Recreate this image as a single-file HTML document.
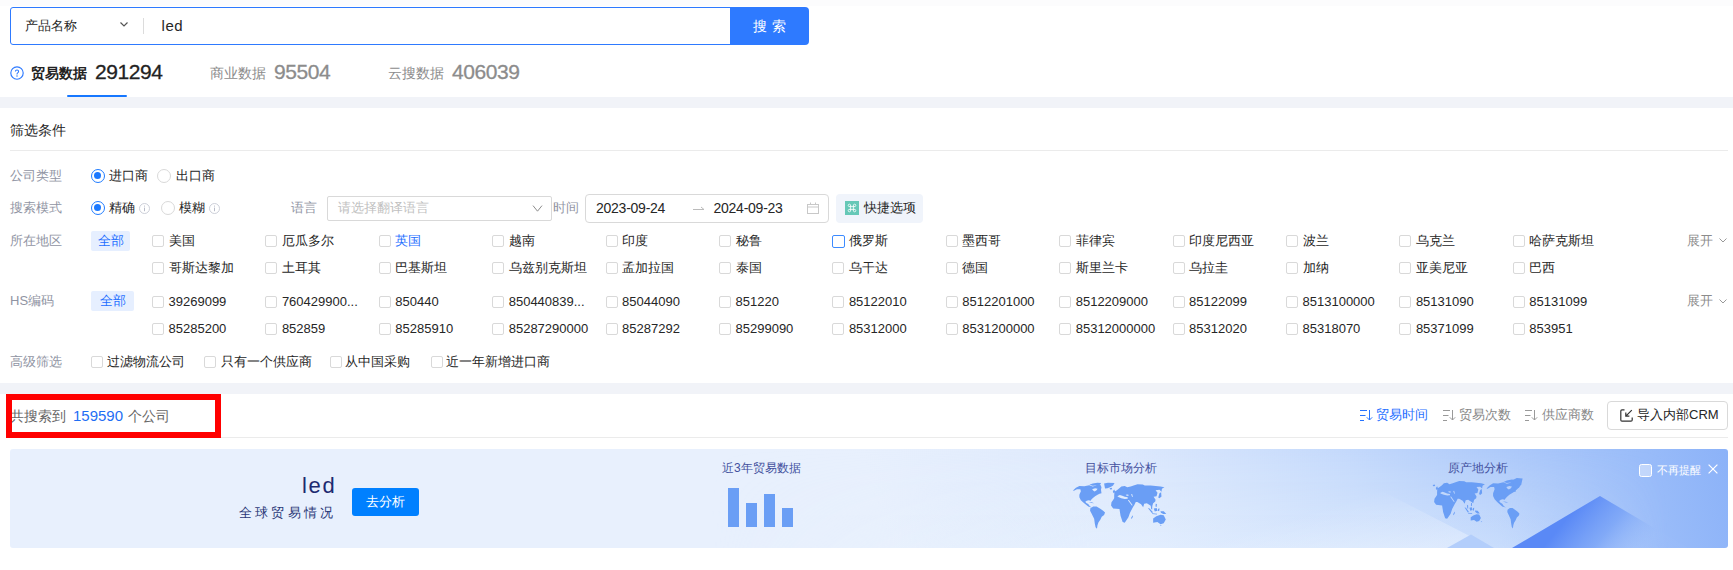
<!DOCTYPE html><html><head><meta charset="utf-8"><style>
*{margin:0;padding:0;box-sizing:border-box}
html,body{width:1733px;height:570px;overflow:hidden;background:#fff}
body{font-family:"Liberation Sans",sans-serif;color:#262626;font-size:13px;position:relative}
.a{position:absolute;white-space:nowrap}
.cb{position:absolute;width:12px;height:12px;border:1px solid #d9d9d9;border-radius:2px;background:#fff}
.lbl{position:absolute;color:#999;font-size:13px;white-space:nowrap}
.t13{font-size:13px;color:#262626}
</style></head><body>
<div class="a" style="left:0;top:0;width:1733px;height:6px;background:#fcfcfd"></div>
<div class="a" style="left:10px;top:7px;width:721px;height:38px;border:1px solid #2e7aff;border-radius:3px 0 0 3px;background:#fff"></div>
<div class="a" id="s_name" style="left:25px;top:18px;font-size:13px;line-height:16px;color:#262626">产品名称</div>
<svg class="a" style="left:119px;top:21px" width="10" height="7" viewBox="0 0 10 7"><path d="M1.5 1.5 L5 5 L8.5 1.5" fill="none" stroke="#555" stroke-width="1.2"/></svg>
<div class="a" style="left:143px;top:18px;width:1px;height:16px;background:#dcdcdc"></div>
<div class="a" id="s_led" style="left:161.5px;top:17px;font-size:15px;line-height:18px;color:#262626;letter-spacing:0.6px">led</div>
<div class="a" style="left:730px;top:7px;width:79px;height:38px;background:#2e7aff;border-radius:0 4px 4px 0"></div>
<div class="a" id="s_btn" style="left:753px;top:18px;font-size:14px;line-height:16px;color:#fff;letter-spacing:5px">搜索</div>
<svg class="a" style="left:10px;top:65.5px" width="14" height="14" viewBox="0 0 14 14"><circle cx="7" cy="7" r="6.2" fill="none" stroke="#2f7bff" stroke-width="1.15"/><path d="M5.4 5.6 Q5.4 4 7 4 Q8.6 4 8.6 5.4 Q8.6 6.3 7.6 6.9 Q7 7.2 7 8.4" fill="none" stroke="#2f7bff" stroke-width="1.1"/><circle cx="7" cy="10.1" r="0.75" fill="#2f7bff"/></svg>
<div class="a" id="t1" style="left:31px;top:65px;font-size:14px;line-height:16px;font-weight:bold;color:#222">贸易数据</div>
<div class="a" id="t1n" style="left:95px;top:60px;font-size:21px;line-height:23px;letter-spacing:-0.45px;-webkit-text-stroke:0.3px currentColor;color:#222">291294</div>
<div class="a" id="t2" style="left:210px;top:65px;font-size:14px;line-height:16px;color:#8c8c8c">商业数据</div>
<div class="a" id="t2n" style="left:274px;top:60px;font-size:21px;line-height:23px;letter-spacing:-0.45px;-webkit-text-stroke:0.3px currentColor;color:#8c8c8c">95504</div>
<div class="a" id="t3" style="left:388px;top:65px;font-size:14px;line-height:16px;color:#8c8c8c">云搜数据</div>
<div class="a" id="t3n" style="left:452px;top:60px;font-size:21px;line-height:23px;letter-spacing:-0.45px;-webkit-text-stroke:0.3px currentColor;color:#8c8c8c">406039</div>
<div class="a" style="left:67px;top:95px;width:60px;height:2px;background:#1677ff;border-radius:1px"></div>
<div class="a" style="left:0;top:97px;width:1733px;height:11px;background:#f1f3f8"></div>
<div class="a" style="left:0;top:383px;width:1733px;height:11px;background:#f1f3f8"></div>
<div class="a" id="f_title" style="left:10px;top:122px;font-size:14px;line-height:16px;color:#262626">筛选条件</div>
<div class="a" style="left:10px;top:150px;width:1718px;height:1px;background:#ebebeb"></div>
<div class="a" id="l1" style="left:10px;top:168px;font-size:13px;line-height:16px;color:#9094a3;">公司类型</div>
<div class="a" style="left:91px;top:168.5px;width:14px;height:14px;border:1.4px solid #1f7cff;border-radius:50%;background:#fff"><div class="a" style="left:2.1px;top:2.1px;width:7px;height:7px;border-radius:50%;background:#1a78ff"></div></div>
<div class="a" style="left:109px;top:168px;font-size:13px;line-height:16px;color:#262626;">进口商</div>
<div class="a" style="left:157px;top:168.5px;width:14px;height:14px;border:1px solid #d9d9d9;border-radius:50%;background:#fff"></div>
<div class="a" style="left:176px;top:168px;font-size:13px;line-height:16px;color:#262626;">出口商</div>
<div class="a" style="left:10px;top:200px;font-size:13px;line-height:16px;color:#9094a3;">搜索模式</div>
<div class="a" style="left:91px;top:201px;width:14px;height:14px;border:1.4px solid #1f7cff;border-radius:50%;background:#fff"><div class="a" style="left:2.1px;top:2.1px;width:7px;height:7px;border-radius:50%;background:#1a78ff"></div></div>
<div class="a" style="left:109px;top:200px;font-size:13px;line-height:16px;color:#262626;">精确</div>
<svg class="a" style="left:139px;top:202.5px" width="11" height="11" viewBox="0 0 11 11"><circle cx="5.5" cy="5.5" r="5" fill="none" stroke="#c6c9d4" stroke-width="0.9"/><rect x="5" y="4.6" width="1" height="3.6" fill="#b8bcc8"/><rect x="5" y="2.6" width="1" height="1" fill="#b8bcc8"/></svg>
<div class="a" style="left:161px;top:201px;width:14px;height:14px;border:1px solid #d9d9d9;border-radius:50%;background:#fff"></div>
<div class="a" style="left:179px;top:200px;font-size:13px;line-height:16px;color:#262626;">模糊</div>
<svg class="a" style="left:209px;top:202.5px" width="11" height="11" viewBox="0 0 11 11"><circle cx="5.5" cy="5.5" r="5" fill="none" stroke="#c6c9d4" stroke-width="0.9"/><rect x="5" y="4.6" width="1" height="3.6" fill="#b8bcc8"/><rect x="5" y="2.6" width="1" height="1" fill="#b8bcc8"/></svg>
<div class="a" style="left:291px;top:200px;font-size:13px;line-height:16px;color:#9094a3;">语言</div>
<div class="a" style="left:327px;top:196px;width:225px;height:25px;border:1px solid #d9d9d9;border-radius:2px"></div>
<div class="a" style="left:338px;top:200px;font-size:13px;line-height:16px;color:#bfbfbf;">请选择翻译语言</div>
<svg class="a" style="left:532px;top:205px" width="11" height="8" viewBox="0 0 11 8"><path d="M1 0.6 L5.5 6.2 L10 0.6" fill="none" stroke="#8c8c8c" stroke-width="1"/></svg>
<div class="a" style="left:552.5px;top:200px;font-size:13px;line-height:16px;color:#9094a3;">时间</div>
<div class="a" style="left:585px;top:194px;width:244px;height:29px;border:1px solid #d9d9d9;border-radius:4px"></div>
<div class="a" style="left:596px;top:199.5px;font-size:14px;line-height:16px;color:#262626;letter-spacing:-0.25px">2023-09-24</div>
<svg class="a" style="left:693px;top:205px" width="12" height="6" viewBox="0 0 12 6"><path d="M0 4.5 H11 L8 2" fill="none" stroke="#bbb" stroke-width="1"/></svg>
<div class="a" style="left:713.5px;top:199.5px;font-size:14px;line-height:16px;color:#262626;letter-spacing:-0.25px">2024-09-23</div>
<svg class="a" style="left:807px;top:202px" width="12" height="12" viewBox="0 0 12 12"><rect x="0.5" y="2.5" width="11" height="9" fill="none" stroke="#c8c8c8" stroke-width="1"/><path d="M0.5 5 H11.5 M3.5 0.5 V3 M8.5 0.5 V3" stroke="#c8c8c8" stroke-width="1"/></svg>
<div class="a" style="left:836px;top:194px;width:87px;height:29px;background:#f0f4fb;border-radius:4px"></div>
<svg class="a" style="left:845px;top:201px" width="14" height="14" viewBox="0 0 14 14"><rect width="14" height="14" fill="#66c8b7"/><g fill="none" stroke="#fff" stroke-width="0.85" opacity="0.95"><path d="M5.6 4.4 V9.6 M8.4 4.4 V9.6 M4.4 5.6 H9.6 M4.4 8.4 H9.6"/><circle cx="4.4" cy="4.4" r="1.2"/><circle cx="9.6" cy="4.4" r="1.2"/><circle cx="4.4" cy="9.6" r="1.2"/><circle cx="9.6" cy="9.6" r="1.2"/></g></svg>
<div class="a" style="left:864px;top:200px;font-size:13px;line-height:16px;color:#262626;">快捷选项</div>
<div class="a" style="left:10px;top:232.5px;font-size:13px;line-height:16px;color:#9094a3;">所在地区</div>
<div class="a" style="left:91px;top:231px;width:39px;height:20px;background:#e6efff;border-radius:2px"></div>
<div class="a" style="left:98px;top:232.5px;font-size:13px;line-height:16px;color:#1f6fff;">全部</div>
<div class="cb" style="left:152.0px;top:235px;border-color:#d9d9d9"></div>
<div class="a" style="left:168.5px;top:232.5px;font-size:13px;line-height:16px;color:#262626;">美国</div>
<div class="cb" style="left:265.4px;top:235px;border-color:#d9d9d9"></div>
<div class="a" style="left:281.9px;top:232.5px;font-size:13px;line-height:16px;color:#262626;">厄瓜多尔</div>
<div class="cb" style="left:378.8px;top:235px;border-color:#d9d9d9"></div>
<div class="a" style="left:395.3px;top:232.5px;font-size:13px;line-height:16px;color:#1f6fff;">英国</div>
<div class="cb" style="left:492.2px;top:235px;border-color:#d9d9d9"></div>
<div class="a" style="left:508.7px;top:232.5px;font-size:13px;line-height:16px;color:#262626;">越南</div>
<div class="cb" style="left:605.6px;top:235px;border-color:#d9d9d9"></div>
<div class="a" style="left:622.1px;top:232.5px;font-size:13px;line-height:16px;color:#262626;">印度</div>
<div class="cb" style="left:719.0px;top:235px;border-color:#d9d9d9"></div>
<div class="a" style="left:735.5px;top:232.5px;font-size:13px;line-height:16px;color:#262626;">秘鲁</div>
<div class="cb" style="left:832.4px;top:235px;width:13px;height:13px;border-color:#3d8bff"></div>
<div class="a" style="left:848.9px;top:232.5px;font-size:13px;line-height:16px;color:#262626;">俄罗斯</div>
<div class="cb" style="left:945.8px;top:235px;border-color:#d9d9d9"></div>
<div class="a" style="left:962.3px;top:232.5px;font-size:13px;line-height:16px;color:#262626;">墨西哥</div>
<div class="cb" style="left:1059.2px;top:235px;border-color:#d9d9d9"></div>
<div class="a" style="left:1075.7px;top:232.5px;font-size:13px;line-height:16px;color:#262626;">菲律宾</div>
<div class="cb" style="left:1172.6px;top:235px;border-color:#d9d9d9"></div>
<div class="a" style="left:1189.1px;top:232.5px;font-size:13px;line-height:16px;color:#262626;">印度尼西亚</div>
<div class="cb" style="left:1286.0px;top:235px;border-color:#d9d9d9"></div>
<div class="a" style="left:1302.5px;top:232.5px;font-size:13px;line-height:16px;color:#262626;">波兰</div>
<div class="cb" style="left:1399.4px;top:235px;border-color:#d9d9d9"></div>
<div class="a" style="left:1415.9px;top:232.5px;font-size:13px;line-height:16px;color:#262626;">乌克兰</div>
<div class="cb" style="left:1512.8px;top:235px;border-color:#d9d9d9"></div>
<div class="a" style="left:1529.3px;top:232.5px;font-size:13px;line-height:16px;color:#262626;">哈萨克斯坦</div>
<div class="cb" style="left:152.0px;top:262px;border-color:#d9d9d9"></div>
<div class="a" style="left:168.5px;top:259.5px;font-size:13px;line-height:16px;color:#262626;">哥斯达黎加</div>
<div class="cb" style="left:265.4px;top:262px;border-color:#d9d9d9"></div>
<div class="a" style="left:281.9px;top:259.5px;font-size:13px;line-height:16px;color:#262626;">土耳其</div>
<div class="cb" style="left:378.8px;top:262px;border-color:#d9d9d9"></div>
<div class="a" style="left:395.3px;top:259.5px;font-size:13px;line-height:16px;color:#262626;">巴基斯坦</div>
<div class="cb" style="left:492.2px;top:262px;border-color:#d9d9d9"></div>
<div class="a" style="left:508.7px;top:259.5px;font-size:13px;line-height:16px;color:#262626;">乌兹别克斯坦</div>
<div class="cb" style="left:605.6px;top:262px;border-color:#d9d9d9"></div>
<div class="a" style="left:622.1px;top:259.5px;font-size:13px;line-height:16px;color:#262626;">孟加拉国</div>
<div class="cb" style="left:719.0px;top:262px;border-color:#d9d9d9"></div>
<div class="a" style="left:735.5px;top:259.5px;font-size:13px;line-height:16px;color:#262626;">泰国</div>
<div class="cb" style="left:832.4px;top:262px;border-color:#d9d9d9"></div>
<div class="a" style="left:848.9px;top:259.5px;font-size:13px;line-height:16px;color:#262626;">乌干达</div>
<div class="cb" style="left:945.8px;top:262px;border-color:#d9d9d9"></div>
<div class="a" style="left:962.3px;top:259.5px;font-size:13px;line-height:16px;color:#262626;">德国</div>
<div class="cb" style="left:1059.2px;top:262px;border-color:#d9d9d9"></div>
<div class="a" style="left:1075.7px;top:259.5px;font-size:13px;line-height:16px;color:#262626;">斯里兰卡</div>
<div class="cb" style="left:1172.6px;top:262px;border-color:#d9d9d9"></div>
<div class="a" style="left:1189.1px;top:259.5px;font-size:13px;line-height:16px;color:#262626;">乌拉圭</div>
<div class="cb" style="left:1286.0px;top:262px;border-color:#d9d9d9"></div>
<div class="a" style="left:1302.5px;top:259.5px;font-size:13px;line-height:16px;color:#262626;">加纳</div>
<div class="cb" style="left:1399.4px;top:262px;border-color:#d9d9d9"></div>
<div class="a" style="left:1415.9px;top:259.5px;font-size:13px;line-height:16px;color:#262626;">亚美尼亚</div>
<div class="cb" style="left:1512.8px;top:262px;border-color:#d9d9d9"></div>
<div class="a" style="left:1529.3px;top:259.5px;font-size:13px;line-height:16px;color:#262626;">巴西</div>
<div class="a" style="left:1687px;top:232.5px;font-size:13px;line-height:16px;color:#8c8c8c;">展开</div>
<svg class="a" style="left:1719px;top:238px" width="8" height="5" viewBox="0 0 8 5"><path d="M0.5 0.5 L4 4 L7.5 0.5" fill="none" stroke="#999" stroke-width="1"/></svg>
<div class="a" style="left:10px;top:293px;font-size:13px;line-height:16px;color:#9094a3;">HS编码</div>
<div class="a" style="left:91px;top:291px;width:43px;height:20px;background:#e6efff;border-radius:2px"></div>
<div class="a" style="left:100px;top:293px;font-size:13px;line-height:16px;color:#1f6fff;">全部</div>
<div class="cb" style="left:152.0px;top:296px;border-color:#d9d9d9"></div>
<div class="a" style="left:168.5px;top:293.5px;font-size:13px;line-height:16px;color:#262626;">39269099</div>
<div class="cb" style="left:265.4px;top:296px;border-color:#d9d9d9"></div>
<div class="a" style="left:281.9px;top:293.5px;font-size:13px;line-height:16px;color:#262626;">760429900...</div>
<div class="cb" style="left:378.8px;top:296px;border-color:#d9d9d9"></div>
<div class="a" style="left:395.3px;top:293.5px;font-size:13px;line-height:16px;color:#262626;">850440</div>
<div class="cb" style="left:492.2px;top:296px;border-color:#d9d9d9"></div>
<div class="a" style="left:508.7px;top:293.5px;font-size:13px;line-height:16px;color:#262626;">850440839...</div>
<div class="cb" style="left:605.6px;top:296px;border-color:#d9d9d9"></div>
<div class="a" style="left:622.1px;top:293.5px;font-size:13px;line-height:16px;color:#262626;">85044090</div>
<div class="cb" style="left:719.0px;top:296px;border-color:#d9d9d9"></div>
<div class="a" style="left:735.5px;top:293.5px;font-size:13px;line-height:16px;color:#262626;">851220</div>
<div class="cb" style="left:832.4px;top:296px;border-color:#d9d9d9"></div>
<div class="a" style="left:848.9px;top:293.5px;font-size:13px;line-height:16px;color:#262626;">85122010</div>
<div class="cb" style="left:945.8px;top:296px;border-color:#d9d9d9"></div>
<div class="a" style="left:962.3px;top:293.5px;font-size:13px;line-height:16px;color:#262626;">8512201000</div>
<div class="cb" style="left:1059.2px;top:296px;border-color:#d9d9d9"></div>
<div class="a" style="left:1075.7px;top:293.5px;font-size:13px;line-height:16px;color:#262626;">8512209000</div>
<div class="cb" style="left:1172.6px;top:296px;border-color:#d9d9d9"></div>
<div class="a" style="left:1189.1px;top:293.5px;font-size:13px;line-height:16px;color:#262626;">85122099</div>
<div class="cb" style="left:1286.0px;top:296px;border-color:#d9d9d9"></div>
<div class="a" style="left:1302.5px;top:293.5px;font-size:13px;line-height:16px;color:#262626;">8513100000</div>
<div class="cb" style="left:1399.4px;top:296px;border-color:#d9d9d9"></div>
<div class="a" style="left:1415.9px;top:293.5px;font-size:13px;line-height:16px;color:#262626;">85131090</div>
<div class="cb" style="left:1512.8px;top:296px;border-color:#d9d9d9"></div>
<div class="a" style="left:1529.3px;top:293.5px;font-size:13px;line-height:16px;color:#262626;">85131099</div>
<div class="cb" style="left:152.0px;top:323px;border-color:#d9d9d9"></div>
<div class="a" style="left:168.5px;top:320.5px;font-size:13px;line-height:16px;color:#262626;">85285200</div>
<div class="cb" style="left:265.4px;top:323px;border-color:#d9d9d9"></div>
<div class="a" style="left:281.9px;top:320.5px;font-size:13px;line-height:16px;color:#262626;">852859</div>
<div class="cb" style="left:378.8px;top:323px;border-color:#d9d9d9"></div>
<div class="a" style="left:395.3px;top:320.5px;font-size:13px;line-height:16px;color:#262626;">85285910</div>
<div class="cb" style="left:492.2px;top:323px;border-color:#d9d9d9"></div>
<div class="a" style="left:508.7px;top:320.5px;font-size:13px;line-height:16px;color:#262626;">85287290000</div>
<div class="cb" style="left:605.6px;top:323px;border-color:#d9d9d9"></div>
<div class="a" style="left:622.1px;top:320.5px;font-size:13px;line-height:16px;color:#262626;">85287292</div>
<div class="cb" style="left:719.0px;top:323px;border-color:#d9d9d9"></div>
<div class="a" style="left:735.5px;top:320.5px;font-size:13px;line-height:16px;color:#262626;">85299090</div>
<div class="cb" style="left:832.4px;top:323px;border-color:#d9d9d9"></div>
<div class="a" style="left:848.9px;top:320.5px;font-size:13px;line-height:16px;color:#262626;">85312000</div>
<div class="cb" style="left:945.8px;top:323px;border-color:#d9d9d9"></div>
<div class="a" style="left:962.3px;top:320.5px;font-size:13px;line-height:16px;color:#262626;">8531200000</div>
<div class="cb" style="left:1059.2px;top:323px;border-color:#d9d9d9"></div>
<div class="a" style="left:1075.7px;top:320.5px;font-size:13px;line-height:16px;color:#262626;">85312000000</div>
<div class="cb" style="left:1172.6px;top:323px;border-color:#d9d9d9"></div>
<div class="a" style="left:1189.1px;top:320.5px;font-size:13px;line-height:16px;color:#262626;">85312020</div>
<div class="cb" style="left:1286.0px;top:323px;border-color:#d9d9d9"></div>
<div class="a" style="left:1302.5px;top:320.5px;font-size:13px;line-height:16px;color:#262626;">85318070</div>
<div class="cb" style="left:1399.4px;top:323px;border-color:#d9d9d9"></div>
<div class="a" style="left:1415.9px;top:320.5px;font-size:13px;line-height:16px;color:#262626;">85371099</div>
<div class="cb" style="left:1512.8px;top:323px;border-color:#d9d9d9"></div>
<div class="a" style="left:1529.3px;top:320.5px;font-size:13px;line-height:16px;color:#262626;">853951</div>
<div class="a" style="left:1687px;top:293px;font-size:13px;line-height:16px;color:#8c8c8c;">展开</div>
<svg class="a" style="left:1719px;top:299px" width="8" height="5" viewBox="0 0 8 5"><path d="M0.5 0.5 L4 4 L7.5 0.5" fill="none" stroke="#999" stroke-width="1"/></svg>
<div class="a" style="left:10px;top:353.5px;font-size:13px;line-height:16px;color:#9094a3;">高级筛选</div>
<div class="cb" style="left:91px;top:355.5px;border-color:#d9d9d9"></div>
<div class="a" style="left:107px;top:353.5px;font-size:13px;line-height:16px;color:#262626;">过滤物流公司</div>
<div class="cb" style="left:204px;top:355.5px;border-color:#d9d9d9"></div>
<div class="a" style="left:220.5px;top:353.5px;font-size:13px;line-height:16px;color:#262626;">只有一个供应商</div>
<div class="cb" style="left:330px;top:355.5px;border-color:#d9d9d9"></div>
<div class="a" style="left:345px;top:353.5px;font-size:13px;line-height:16px;color:#262626;">从中国采购</div>
<div class="cb" style="left:431px;top:355.5px;border-color:#d9d9d9"></div>
<div class="a" style="left:446px;top:353.5px;font-size:13px;line-height:16px;color:#262626;">近一年新增进口商</div>
<div class="a" style="left:10px;top:407.5px;font-size:14px;line-height:16px;color:#666;">共搜索到</div>
<div class="a" style="left:73px;top:407.5px;font-size:15px;line-height:16px;color:#1f6ef4;">159590</div>
<div class="a" style="left:128px;top:407.5px;font-size:14px;line-height:16px;color:#666;">个公司</div>
<div class="a" style="left:6px;top:394px;width:215px;height:44px;border:6px solid #ff0000"></div>
<div class="a" style="left:221px;top:437px;width:1507px;height:1px;background:#ebebeb"></div>
<svg class="a" style="left:1360px;top:409px" width="14" height="13" viewBox="0 0 14 13"><path d="M0 1.5 H7 M0 6.5 H5.5 M0 11.5 H4" stroke="#2673ff" stroke-width="1.1"/><path d="M9.5 1 V11 M6.8 8.3 L9.5 11 L12.2 8.3" fill="none" stroke="#2673ff" stroke-width="1"/></svg>
<div class="a" style="left:1376px;top:407px;font-size:13px;line-height:16px;color:#1f6fff;">贸易时间</div>
<svg class="a" style="left:1443px;top:409px" width="14" height="13" viewBox="0 0 14 13"><path d="M0 1.5 H7 M0 6.5 H5.5 M0 11.5 H4" stroke="#999" stroke-width="1.1"/><path d="M9.5 1 V11 M6.8 8.3 L9.5 11 L12.2 8.3" fill="none" stroke="#999" stroke-width="1"/></svg>
<div class="a" style="left:1459px;top:407px;font-size:13px;line-height:16px;color:#888;">贸易次数</div>
<svg class="a" style="left:1525px;top:409px" width="14" height="13" viewBox="0 0 14 13"><path d="M0 1.5 H7 M0 6.5 H5.5 M0 11.5 H4" stroke="#999" stroke-width="1.1"/><path d="M9.5 1 V11 M6.8 8.3 L9.5 11 L12.2 8.3" fill="none" stroke="#999" stroke-width="1"/></svg>
<div class="a" style="left:1541.5px;top:407px;font-size:13px;line-height:16px;color:#888;">供应商数</div>
<div class="a" style="left:1607px;top:401px;width:121px;height:29px;border:1px solid #d9d9d9;border-radius:4px"></div>
<svg class="a" style="left:1620px;top:409px" width="13" height="13" viewBox="0 0 13 13"><path d="M4.5 0.8 H2 Q0.8 0.8 0.8 2 V11 Q0.8 12.2 2 12.2 H11 Q12.2 12.2 12.2 11 V8.5" fill="none" stroke="#333" stroke-width="1.2"/><path d="M11.8 1.2 L5.8 7.2 M5.8 3.6 V7.2 H9.4" fill="none" stroke="#333" stroke-width="1.2"/></svg>
<div class="a" style="left:1637px;top:407px;font-size:13px;line-height:16px;color:#262626;">导入内部CRM</div>
<div class="a" id="banner" style="left:10px;top:449px;width:1718px;height:99px;border-radius:3px;overflow:hidden">
<svg class="a" style="left:0;top:0" width="1718" height="99" viewBox="0 0 1718 99">
<defs>
<linearGradient id="bg" gradientUnits="userSpaceOnUse" x1="900" y1="180" x2="1718" y2="-40">
<stop offset="0" stop-color="#e8f0fd"/><stop offset="0.3" stop-color="#dde9fd"/><stop offset="0.55" stop-color="#c5dafc"/><stop offset="0.78" stop-color="#a8c6fa"/><stop offset="1" stop-color="#8ab1f8"/>
</linearGradient>
<linearGradient id="tri" gradientUnits="userSpaceOnUse" x1="1565" y1="60" x2="1625" y2="110">
<stop offset="0" stop-color="#5a89f6"/><stop offset="0.5" stop-color="#7aa4f7" stop-opacity="0.85"/><stop offset="1" stop-color="#9dbef9" stop-opacity="0.2"/>
</linearGradient>
<linearGradient id="wedge" gradientUnits="userSpaceOnUse" x1="1390" y1="35" x2="1410" y2="99">
<stop offset="0" stop-color="#ffffff" stop-opacity="0"/><stop offset="1" stop-color="#ffffff" stop-opacity="0.3"/>
</linearGradient>
<linearGradient id="low" gradientUnits="userSpaceOnUse" x1="0" y1="0" x2="0" y2="99">
<stop offset="0" stop-color="#eaf4ff" stop-opacity="0"/><stop offset="1" stop-color="#eaf4ff" stop-opacity="0.4"/>
</linearGradient>
<linearGradient id="lowx" gradientUnits="userSpaceOnUse" x1="700" y1="0" x2="1660" y2="0">
<stop offset="0" stop-color="#fff" stop-opacity="0"/><stop offset="0.4" stop-color="#fff" stop-opacity="1"/><stop offset="0.82" stop-color="#fff" stop-opacity="1"/><stop offset="1" stop-color="#fff" stop-opacity="0"/>
</linearGradient>
<mask id="lowm"><rect width="1718" height="99" fill="url(#lowx)"/></mask>
</defs>
<rect width="1718" height="99" fill="url(#bg)"/>
<rect width="1718" height="99" fill="url(#low)" mask="url(#lowm)"/>
<polygon points="1200,0 1290,0 1483,99 1200,99" fill="url(#wedge)"/>
<polygon points="1502,99 1590,47 1678,99" fill="url(#tri)"/>
<polygon points="1437,99 1461,85.5 1484,99" fill="#b3cefb"/>
</svg>
</div>
<div class="a" id="b_led" style="left:302px;top:474px;font-size:22px;line-height:24px;color:#1d2a70;letter-spacing:1.7px">led</div>
<div class="a" id="b_sub" style="left:238.5px;top:505px;font-size:13px;line-height:16px;color:#2a3878;letter-spacing:3.35px">全球贸易情况</div>
<div class="a" style="left:352px;top:488px;width:67px;height:28px;background:#0080ff;border-radius:3px"></div>
<div class="a" id="b_btn" style="left:366px;top:494px;font-size:13px;line-height:16px;color:#fff">去分析</div>
<div class="a" id="b_t1" style="left:722px;top:460px;font-size:12px;line-height:16px;color:#43509e">近3年贸易数据</div>
<div class="a" style="left:727.5px;top:488px;width:11px;height:39px;background:#6a9ef5"></div>
<div class="a" style="left:746px;top:503px;width:11px;height:24px;background:#6a9ef5"></div>
<div class="a" style="left:764px;top:494px;width:11px;height:33px;background:#6a9ef5"></div>
<div class="a" style="left:782px;top:508px;width:11px;height:19px;background:#6a9ef5"></div>
<div class="a" id="b_t2" style="left:1085px;top:460px;font-size:12px;line-height:16px;color:#43509e">目标市场分析</div>
<svg class="a" style="left:1060px;top:470px" width="120" height="70" viewBox="1060 470 120 70" fill="#6a9ef5"><g transform="matrix(0.09470,0,0,0.09473,1070,478)"><path fill-rule="evenodd" d="M31.5,132.7 L62.6,104.1 L98.9,83.4 L150.9,86 L202.8,75.6 L239.1,88.6 L270.2,80.8 L296.2,62.6 L322.1,73 L332.5,98.9 L327.3,124.9 L332.5,161.2 L311.7,166.4 L291,176.8 L265,192.4 L239.1,213.1 L223.5,228.7 L218.3,239.1 L197.6,233.9 L176.8,239.1 L161.2,249.5 L171.6,265 L192.4,275.4 L207.9,296.2 L228.7,311.7 L192.4,301.4 L166.4,280.6 L140.5,259.8 L114.5,233.9 L98.9,202.8 L98.9,176.8 L114.5,140.5 L109.3,119.7 L73,119.7 L41.9,135.3 Z M233.9,119.7 L265,109.3 L291,114.5 L280.6,130.1 L259.8,143.1 L244.3,132.7 Z"/><path fill-rule="evenodd" d="M205,72 L240,58 L290,50 L328,54 L318,72 L280,78 L240,82 Z"/><path fill-rule="evenodd" d="M197.6,254.7 L228.7,257.3 L254.6,267.6 L228.7,265 Z"/><path fill-rule="evenodd" d="M360,58 L400,50 L470,52 L455,80 L430,95 L395,108 L370,110 L365,85 Z"/><path fill-rule="evenodd" d="M215,320 L245,300 L280,300 L320,325 L350,345 L370,365 L360,390 L335,410 L320,440 L300,470 L290,500 L285,535 L270,520 L262,480 L255,430 L230,380 L212,345 Z"/><path fill-rule="evenodd" d="M466.5,187.2 L469.1,145.7 L495.1,130.1 L521,109.3 L541.8,88.6 L578.1,83.4 L604.1,98.9 L640.4,88.6 L671.5,78.2 L713,65.2 L768.5,67.8 L789.3,78.2 L851.6,78.2 L903.5,83.4 L955.4,88.6 L996.9,98.9 L971,114.5 L965.8,145.7 L945,124.9 L903.5,130.1 L924.2,156 L913.9,192.4 L882.7,197.6 L903.5,228.7 L900.4,248.9 L878.1,265.5 L867,304.4 L844.8,287.8 L811.5,265.5 L783.7,271.1 L772.6,310 L750.3,276.6 L711.4,254.4 L694.7,254.4 L678.1,287.8 L667,304.4 L633.6,365.6 L616.9,415.6 L578,471.1 L555.8,465.6 L533.6,398.9 L522.4,326.7 L455.7,321.1 L433.5,290 L438,255 L455,232 L466.5,215 Z M500.3,192.4 L526.2,179.4 L552.2,187.2 L578.1,197.6 L609.2,202.8 L609.2,218.3 L578.1,220.9 L541.8,213.1 L510.6,200.2 Z M588.5,176.8 L614.4,174.2 L619.6,187.2 L598.9,187.2 Z M645.6,171.6 L656,169 L663.7,197.6 L656,200.2 Z M611.4,235 L622,232 L660,285 L655,292 Z"/><path fill-rule="evenodd" d="M945,160 L962,150 L966,195 L945,215 L932,205 Z"/><path fill-rule="evenodd" d="M644.7,421.1 L661.4,393.3 L664.2,410 L650.3,432.2 Z"/><path fill-rule="evenodd" d="M822,318 L840,322 L877,362 L864,369 Z M868,372 L920,377 L918,385 L866,380 Z M885,322 L915,316 L924,345 L895,353 Z M930,324 L946,321 L941,352 L928,346 Z M955,350 L990,352 L1017,381 L985,379 L960,366 Z M905,272 L918,274 L915,306 L903,300 Z M852,290 L868,298 L868,332 L857,326 Z"/><path fill-rule="evenodd" d="M878.1,426.7 L911.5,404.4 L955.9,387.8 L989.3,393.3 L1011.5,437.8 L989.3,476.7 L955.9,487.8 L922.6,465.6 L878.1,471.1 Z"/><path fill-rule="evenodd" d="M950,497 L967,499 L960,507 Z"/><path fill-rule="evenodd" d="M452,140 L468,122 L478,148 L460,160 Z"/><path fill-rule="evenodd" d="M418,108 L440,102 L446,118 L424,122 Z"/></g></svg>
<div class="a" id="b_t3" style="left:1448px;top:460px;font-size:12px;line-height:16px;color:#43509e">原产地分析</div>
<svg class="a" style="left:1420px;top:465px" width="115" height="70" viewBox="1420 465 115 70" fill="#6a9ef5"><g transform="matrix(0.09017,0,0,0.09288,1395.01,475.04)"><path fill-rule="evenodd" d="M466.5,187.2 L469.1,145.7 L495.1,130.1 L521,109.3 L541.8,88.6 L578.1,83.4 L604.1,98.9 L640.4,88.6 L671.5,78.2 L713,65.2 L768.5,67.8 L789.3,78.2 L851.6,78.2 L903.5,83.4 L955.4,88.6 L996.9,98.9 L971,114.5 L965.8,145.7 L945,124.9 L903.5,130.1 L924.2,156 L913.9,192.4 L882.7,197.6 L903.5,228.7 L900.4,248.9 L878.1,265.5 L867,304.4 L844.8,287.8 L811.5,265.5 L783.7,271.1 L772.6,310 L750.3,276.6 L711.4,254.4 L694.7,254.4 L678.1,287.8 L667,304.4 L633.6,365.6 L616.9,415.6 L578,471.1 L555.8,465.6 L533.6,398.9 L522.4,326.7 L455.7,321.1 L433.5,290 L438,255 L455,232 L466.5,215 Z M500.3,192.4 L526.2,179.4 L552.2,187.2 L578.1,197.6 L609.2,202.8 L609.2,218.3 L578.1,220.9 L541.8,213.1 L510.6,200.2 Z M588.5,176.8 L614.4,174.2 L619.6,187.2 L598.9,187.2 Z M645.6,171.6 L656,169 L663.7,197.6 L656,200.2 Z M611.4,235 L622,232 L660,285 L655,292 Z"/><path fill-rule="evenodd" d="M945,160 L962,150 L966,195 L945,215 L932,205 Z"/><path fill-rule="evenodd" d="M644.7,421.1 L661.4,393.3 L664.2,410 L650.3,432.2 Z"/><path fill-rule="evenodd" d="M950,497 L967,499 L960,507 Z"/><path fill-rule="evenodd" d="M452,140 L468,122 L478,148 L460,160 Z"/><path fill-rule="evenodd" d="M418,108 L440,102 L446,118 L424,122 Z"/></g><g transform="matrix(0.0764,0,0,0.076,1403.62,484.73)"><path fill-rule="evenodd" d="M878.1,426.7 L911.5,404.4 L955.9,387.8 L989.3,393.3 L1011.5,437.8 L989.3,476.7 L955.9,487.8 L922.6,465.6 L878.1,471.1 Z"/></g><g transform="matrix(0.07815,0,0,0.09746,1400.31,476.45)"><path fill-rule="evenodd" d="M822,318 L840,322 L877,362 L864,369 Z M868,372 L920,377 L918,385 L866,380 Z M885,322 L915,316 L924,345 L895,353 Z M930,324 L946,321 L941,352 L928,346 Z M955,350 L990,352 L1017,381 L985,379 L960,366 Z M905,272 L918,274 L915,306 L903,300 Z M852,290 L868,298 L868,332 L857,326 Z"/></g><g transform="matrix(0.09784,0,0,0.10687,1483.42,474.26)"><path fill-rule="evenodd" d="M31.5,132.7 L62.6,104.1 L98.9,83.4 L150.9,86 L202.8,75.6 L239.1,88.6 L270.2,80.8 L296.2,62.6 L322.1,73 L332.5,98.9 L327.3,124.9 L332.5,161.2 L311.7,166.4 L291,176.8 L265,192.4 L239.1,213.1 L223.5,228.7 L218.3,239.1 L197.6,233.9 L176.8,239.1 L161.2,249.5 L171.6,265 L192.4,275.4 L207.9,296.2 L228.7,311.7 L192.4,301.4 L166.4,280.6 L140.5,259.8 L114.5,233.9 L98.9,202.8 L98.9,176.8 L114.5,140.5 L109.3,119.7 L73,119.7 L41.9,135.3 Z M233.9,119.7 L265,109.3 L291,114.5 L280.6,130.1 L259.8,143.1 L244.3,132.7 Z"/><path fill-rule="evenodd" d="M205,72 L240,58 L290,50 L328,54 L318,72 L280,78 L240,82 Z"/><path fill-rule="evenodd" d="M197.6,254.7 L228.7,257.3 L254.6,267.6 L228.7,265 Z"/></g><g transform="matrix(0.08364,0,0,0.205,1483.29,467.75)"><path fill-rule="evenodd" d="M360,58 L400,50 L470,52 L455,80 L430,95 L395,108 L370,110 L365,85 Z"/></g><g transform="matrix(0.07722,0,0,0.0868,1490.93,481.96)"><path fill-rule="evenodd" d="M215,320 L245,300 L280,300 L320,325 L350,345 L370,365 L360,390 L335,410 L320,440 L300,470 L290,500 L285,535 L270,520 L262,480 L255,430 L230,380 L212,345 Z"/></g></svg>
<div class="a" style="left:1639px;top:463.5px;width:13px;height:13px;border:1px solid #fff;border-radius:2.5px;background:rgba(255,255,255,0.4)"></div>
<div class="a" id="b_nr" style="left:1657px;top:462.5px;font-size:11px;line-height:14px;color:#fff">不再提醒</div>
<svg class="a" style="left:1707.5px;top:464px" width="10" height="10" viewBox="0 0 10 10"><path d="M0.6 0.6 L9.4 9.4 M9.4 0.6 L0.6 9.4" stroke="#fff" stroke-width="1.2"/></svg>
</body></html>
